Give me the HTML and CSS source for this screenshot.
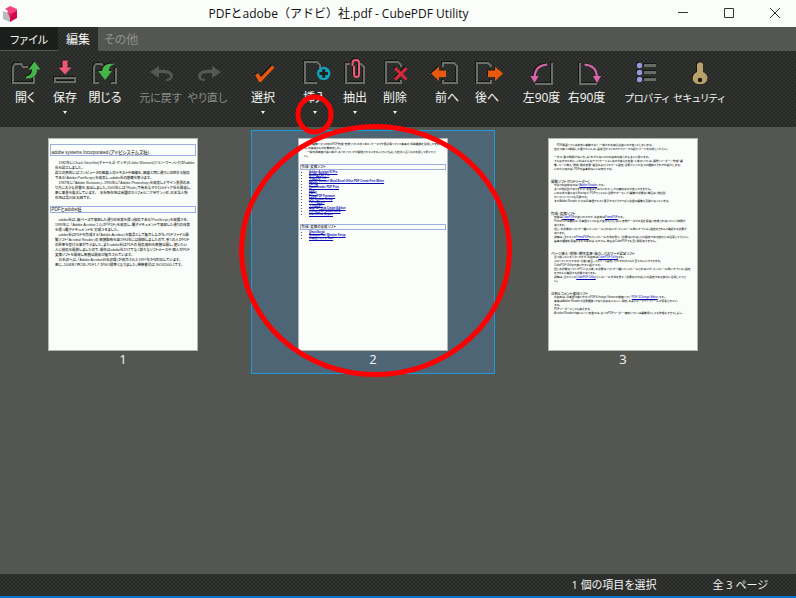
FILE: index.html
```html
<!DOCTYPE html>
<html lang="ja">
<head>
<meta charset="utf-8">
<title>PDFとadobe（アドビ）社.pdf - CubePDF Utility</title>
<link rel="stylesheet" href="styles.css">
</head>
<body>
<header class="titlebar">
  <svg class="logo" viewBox="0 0 16 18" aria-hidden="true">
    <path fill="#b9bbb9" d="M0 6l7 3v8l-7-3z"/>
    <path fill="#d5054f" d="M7 9l7-4v8l-7 4z"/>
    <path fill="#f2437c" d="M2 4l5-3 7 3v2L7 9 4 8l1-2z"/>
    <path fill="#e4205f" d="M5 8l4 1-2 4z"/>
  </svg>
  <h1 class="title">PDFとadobe（アドビ）社.pdf - CubePDF Utility</h1>
  <div class="window-controls">
    <button aria-label="最小化"><svg viewBox="0 0 12 12"><path d="M1 5.500h10"/></svg></button>
    <button aria-label="最大化"><svg viewBox="0 0 12 12"><path d="M1.500 1.500h9v9h-9z"/></svg></button>
    <button aria-label="閉じる"><svg viewBox="0 0 12 12"><path d="M1 1l10 10M11 1L1 11"/></svg></button>
  </div>
</header>
<nav class="tabs">
  <button class="tab tab-file">ファイル</button>
  <button class="tab tab-active">編集</button>
  <button class="tab tab-other">その他</button>
</nav>
<div class="ribbon texture" role="toolbar" aria-label="編集">
  <div class="group">
    <button class="tool"><svg viewBox="0 0 30 28"><path class="line" d="M24 19v6H3V9l2-3h6l2 3h5"/><path class="edge" fill="#45b549" d="M24.500 3.500l6 8h-3.500c0 6-3 9-11 9v-2c4-1 6-3 6-7h-3.500z"/></svg><span>開く</span></button>
    <button class="tool"><svg viewBox="0 0 30 28"><path class="edge" fill="#ee5977" d="M12.500 2.500h5v7h4L15 16.500 8.500 9.500h4z"/><path class="line" d="M5 20h20v4H5z"/></svg><span>保存</span><i class="caret"></i></button>
    <button class="tool"><svg viewBox="0 0 30 28"><path class="line" d="M9 25H4V9l2-3h5l2 2M22 25h4V10M21 25h5"/><path class="edge" fill="#45b549" d="M25 6c-4 1-6 3-6 7h3l-7 9-7-9h4c1-6 5-8 13-7z"/></svg><span>閉じる</span></button>
  </div>
  <div class="group group-history">
    <button class="tool" disabled><svg viewBox="0 0 30 28"><path fill="#555755" d="M4 14l9-6v4c9-1 14 2 14 6 0 3-3 5-7 5v-2c3 0 4-1 4-3 0-2-3-3-11-3v5z"/></svg><span>元に戻す</span></button>
    <button class="tool" disabled><svg viewBox="0 0 30 28"><path fill="#555755" d="M28 14l-9-6v4c-9-1-14 2-14 6 0 3 3 5 7 5v-2c-3 0-4-1-4-3 0-2 3-3 11-3v5z"/></svg><span>やり直し</span></button>
  </div>
  <div class="group">
    <button class="tool"><svg viewBox="0 0 30 28"><path class="edge" fill="#e8590f" d="M7 17l3-2 3 4L24 7.500l2.500 2L13 24h-2z"/></svg><span>選択</span><i class="caret"></i></button>
  </div>
  <div class="group">
    <button class="tool"><svg viewBox="0 0 30 28"><path class="line" d="M17 25H5V4h12l3 3v3"/><circle cx="23.700" cy="15.500" r="6.700" fill="#10a2b9"/><path stroke="#202220" stroke-width="3" d="M19.500 15.500h8.400M23.700 11.300v8.400"/></svg><span>挿入</span><i class="caret"></i></button>
    <button class="tool"><svg viewBox="0 0 30 28"><path class="line" d="M10 6H6v19h18V9l-3-3h-1"/><path class="edge" fill="none" stroke="#ee5977" stroke-width="2" d="M12.500 8V5c0-4 6.500-4 6.500 0v11c0 4-5 4-5 0V8"/></svg><span>抽出</span><i class="caret"></i></button>
    <button class="tool"><svg viewBox="0 0 30 28"><path class="line" d="M18 25H6V4h12l3 3v2M21 22v3h-4"/><path class="edge" fill="none" stroke="#d8293b" stroke-width="3" d="M15 10l11.500 11.500M26.500 10L15 21.500"/></svg><span>削除</span><i class="caret"></i></button>
  </div>
  <div class="group">
    <button class="tool"><svg viewBox="0 0 30 28"><path class="line" d="M11 9V5h11l3 3v17H11v-3"/><path class="edge" fill="#e8590f" d="M-1 15.500L7 8.500v4h7v6.500H7v4z"/></svg><span>前へ</span></button>
    <button class="tool"><svg viewBox="0 0 30 28"><path class="line" d="M19 9V8l-3-3H5v20h14v-3"/><path class="edge" fill="#e8590f" d="M31 15.500l-8-7v4h-7v6.500h7v4z"/></svg><span>後へ</span></button>
  </div>
  <div class="group group-rotate">
    <button class="tool"><svg viewBox="0 0 30 28"><path class="line" d="M25 5v21H8"/><path class="edge" fill="none" stroke="#dc66ae" stroke-width="2" d="M20 6.500C12 7 8 11 7.500 19"/><path fill="#dc66ae" d="M3.500 18h8l-4 7z"/></svg><span>左90度</span></button>
    <button class="tool"><svg viewBox="0 0 30 28"><path class="line" d="M8 5v21h17"/><path class="edge" fill="none" stroke="#dc66ae" stroke-width="2" d="M12.500 6.500C20.500 7 24.500 11 25 19"/><path fill="#dc66ae" d="M21 18h8l-4 7z"/></svg><span>右90度</span></button>
  </div>
  <div class="group group-wide">
    <button class="tool"><svg viewBox="0 0 30 28"><g class="edge"><path stroke="#696b69" stroke-width="3" d="M12 7.500h12M12 14.500h12M12 21.500h12"/><g fill="#9898dc"><circle cx="7.500" cy="7.500" r="2.700"/><circle cx="7.500" cy="14.500" r="2.700"/><circle cx="7.500" cy="21.500" r="2.700"/></g></g></svg><span>プロパティ</span></button>
    <button class="tool"><svg viewBox="0 0 30 28"><path class="edge" fill="#b7a069" d="M13 6l1.500-1.500h3L19 6v8c6 2 6 11-1 12h-4c-7-1-7-10-1-12z"/><circle cx="16" cy="22" r="2.200" fill="#1b1c1a"/></svg><span>セキュリティ</span></button>
  </div>
</div>
<main class="pages">
  <figure class="item">
    <div class="sheet sheet-a">
      <h2 class="tall">adobe systems Incorporated（アドビシステムズ社）</h2>
      <p>　1982年にChuck Geschke(チャールズ・ゲシキ)とJohn Warnock(ジョン・ワーノック)がadobe<br>社を設立しました。<br>設立の目的にはコンピュータの画面上のテキストや画像を、画面と同じ通りに印刷する技術<br>である「Adobe PostScript」を発表し、adobe社の基礎を築きます。<br>　1987年に「Adobe Illustrator」、1990年に「Adobe Photoshop」を発表しデザイン業界のあ<br>り方に大きな影響を 及ぼしました。2005年には「Flash」で有名なマクロメディア社を買収し、<br>更に事業を拡大しています。　本社所在地は米国のカリフォルニア州サンノゼ、日本法人所<br>在地は品川区大崎です。</p>
      <h2>PDFとadobe社</h2>
      <p>　adobe社は、紙ベースで意図した通りの体裁を保つ技術である「PostScript」を発展させ、<br>1993年に 「Adobe Acrobat 1.0」が「PDF」を発表し、電子ドキュメントで意図した通りの体裁<br>を保つ電子ドキュメントを 実現させました。<br>　adobe社はPDFを作成する「Adobe Acrobat」を製品として販売しながら、PDFファイル閲<br>覧ソフト「Acrobat Reader」の 無償配布を翌1994年には開始しましたので、多くの人がPDF<br>の恩恵を受ける事ができました。またadobe社はPDFの 技術資料を無償公開し、使いたい<br>人に技術を開放しましたので、現在はadobe社だけでなく様々なソフトメーカや 個人がPDF<br>変換ソフトを開発し無償公開及び販売されています。<br>　日本語へは、「Adobe Acrobat日本語版」が発売された1997年から対応しています。<br>更に、2008年7月2日、PDF1.7 がISO標準となりました。規格番号は ISO32000-1です。</p>
    </div>
    <figcaption>1</figcaption>
  </figure>
  <figure class="item item-selected">
    <div class="sheet sheet-b">
      <p>　PDF編集ソフトの中のPDF作成・変換ソフトのまとめと、ケータイや表計算ソフトで本来の 印刷機能を活用した変換<br>も、出来得るものを集めました。<br>　一般利用価値が高い為か、多くのソフトがが開発されています。いろいろ試して自分に合うものを探して見て下さ<br>い。</p>
      <h2>作成・変換ソフト</h2>
      <ul>
        <li><a href="#">Adobe Acrobat XI Pro</a></li><li><a href="#">BullZip PDF Prt</a></li><li><a href="#">CubePDF 1.0</a></li><li><a href="#">doPDF Convert Word Excel Office PDF Create Free Writer</a></li><li><a href="#">PDF24</a></li><li><a href="#">Foxit Reader PDF Print</a></li><li><a href="#">iText</a></li><li><a href="#">PDFill</a></li><li><a href="#">PrimoPDF Freeware</a></li><li><a href="#">PDFCreator Setup</a></li><li><a href="#">Pdf reDirect</a></li><li><a href="#">クセロPDF</a></li><li><a href="#">瞬簡PDF 作成 Create Edition</a></li><li><a href="#">いきなりPDF COMPLETE</a></li><li><a href="#">LibreOffice Export</a></li>
      </ul>
      <h2>作成・変換の支援ソフト</h2>
      <ul>
        <li><a href="#">GhostScript</a></li><li><a href="#">Redmon Port Monitor Setup</a></li><li><a href="#">日本語フォント Tool</a></li>
      </ul>
    </div>
    <figcaption>2</figcaption>
  </figure>
  <figure class="item">
    <div class="sheet sheet-c">
      <p>　PDF関連ソフトは非常に本数が多く、一体どれを使えば良いのか迷ってしまいます。<br>自分で使って納得して選びたい人は、是非当サイトのカテゴリーから紹介ページをお探しください。<br><br>一方で、選ぶ時間がない方、よくわからないのでお勧めを使う方も多いと思います。<br>そんな方のために、これはどんなアプリケーションなのか使える定番・人気のソフトは、閲覧（リーダー）・作成・編<br>集、ページ挿入・削除・順序変更・結合およびパスワード設定、注釈といった各々の機能でそれぞれ紹介します。<br>これだけあれば、PDFの基本的なことは充分です。</p>
      <h3>閲覧ソフト（PDFリーダー）</h3>
      <p>やはりお勧めなのは「<a href="#">Adobe Reader</a>」です。<br>多くの他社製がありますが、定番はやはりこれで、しかも無料なので安心できません。<br>これ以外で選ぶならFoxitなど、PDFファイルに注釈やマーキング（編集が必要な）場合は、他社製<br>のソフトについても可能です。<br>またAdobe Reader だけは日本語テキスト表示やタブブラウズに必須の編集も可能となっています。</p>
      <h3>作成・変換ソフト</h3>
      <p>定番は<a href="#">CubePDF</a>が良いのですが、お勧めは<a href="#">PrimoPDF</a>です。<br>PrimoPDFは無料で、日本語ファイル名が文字化けしない。変換データがお金を意識に変換されないという特徴が<br>あります。<br>但し、不必要なソフトが一緒にインストールされないか、インストール時にオプション設定をきちんと確認する必要が<br>あります。<br>詳細は、当サイトの<a href="#">PrimoPDF</a>のインストール方法を見て、「必要なければ」との設定がある部分には注意して下さい。<br>基本の機能を意識するのであれば、もちろん、有名なCubePDFでも全く問題ありません。</p>
      <h3>ページ挿入・削除・順序変更・結合、パスワード設定ソフト</h3>
      <p>全て揃っているソフトですが、お勧めは<a href="#">CubePDF Utility</a>です。<br>このソフトだけでほぼ、分割、結合、パスワード設定、それぞれほとんど全てのことができます。<br>CubePDF Utilityが使いやすい紹介です。<br>但し不必要なソフトがPCに入る為、不必要なソフトが一緒にインストールされないか、インストール時にオプション設定<br>をきちんと確認する必要があります。<br>詳細は、当サイトの<a href="#">CubePDF Utility</a>インストール方法を見て、「必要なければ」との設定がある部分に注意して下さ<br>い。</p>
      <h3>注釈&amp;コメント追加ソフト</h3>
      <p>お勧めは、日本語で使いやすいPDFXchange Viewerの後継ソフト「<a href="#">PDF-XChange Editor</a>」です。<br>本来はAdobe Readerで注釈機能、かなり多彩なコメント、図形、およびマークアップツールが用意されてい<br>ます。<br>PDFリーダーとしても使えます。<br>Acrobat Readerが使いにくい定番では、多くのPDFリーダー（無料ソフト）は編集用としても作成もできてしょう。</p>
    </div>
    <figcaption>3</figcaption>
  </figure>
</main>
<footer class="status texture">
  <span>1 個の項目を選択</span>
  <span>全 3 ページ</span>
</footer>
<svg class="annotation" aria-hidden="true">
  <ellipse cx="314.500" cy="114.500" rx="16.500" ry="17.500"/>
  <ellipse cx="375.500" cy="250.500" rx="134" ry="124"/>
</svg>
</body>
</html>
```
FILE: styles.css
```css
* {
  box-sizing: border-box;
}

body {
  margin: 0;
  min-height: 100vh;
  display: flex;
  flex-direction: column;
  position: relative;
  background: #545652;
  color: #f4f6f3;
  font-family: "Open Sans", "Noto Sans CJK JP", sans-serif;
  font-size: 12px;
  font-feature-settings: "palt";
}

button {
  margin: 0;
  padding: 0;
  border: 0;
  background: none;
  color: inherit;
  font: inherit;
  font-feature-settings: inherit;
}

.texture,
.tab-active {
  background-color: #323431;
  background-image:
    radial-gradient(circle, #272926 1px, transparent 1px),
    radial-gradient(circle, #272926 1px, transparent 1px);
  background-size: 4px 4px;
  background-position: 0 0, 2px 2px;
}

.titlebar {
  display: flex;
  align-items: center;
  height: 27px;
  padding-left: 3px;
  background: #fafdfa;
  color: #111;
}

.logo {
  width: 16px;
  height: 18px;
}

.title {
  flex: 1;
  margin: 0;
  font-size: 12px;
  line-height: 24px;
  font-weight: 400;
  font-feature-settings: normal;
  text-align: center;
  white-space: nowrap;
}

.window-controls {
  display: flex;
}

.window-controls button {
  display: grid;
  place-items: center;
  width: 46px;
  height: 26px;
  padding: 0 0 2px 4px;
}

.window-controls svg {
  width: 12px;
  height: 12px;
  fill: none;
  stroke: #333;
}

.tabs {
  display: flex;
  height: 24px;
}

.tab {
  width: 40px;
  padding-top: 2px;
  line-height: 22px;
  white-space: nowrap;
}

.tab-file {
  width: 58px;
  background: #1c1e1b;
  border-bottom: 1px solid #545652;
  font-size: 11px;
}

.tab-other {
  width: 46px;
  color: #8f918e;
}

.ribbon {
  display: flex;
  gap: 12px;
  height: 76px;
  padding: 7px 5px 0;
}

.group {
  display: flex;
}

.tool {
  display: flex;
  flex-direction: column;
  align-items: center;
  width: 40px;
  line-height: 20px;
  white-space: nowrap;
}

.group-history .tool {
  width: 47px;
  font-size: 11px;
}

.group-rotate .tool {
  width: 45px;
}

.group-wide .tool {
  width: 52px;
  font-size: 10px;
}

.tool:disabled {
  color: #8a8c89;
}

.tool svg {
  width: 30px;
  height: 28px;
  overflow: visible;
}

.tool span {
  margin-top: 2px;
}

.line {
  fill: none;
  stroke: #6b6d6a;
  stroke-width: 2;
}

.line,
.edge {
  filter: drop-shadow(-1px -1px 0 #161715);
}

.caret {
  margin-top: 3px;
  border: 2px solid transparent;
  border-top: 3px solid #f4f6f3;
  border-bottom: 0;
}

.pages {
  flex: 1;
  display: grid;
  grid-template-columns: repeat(auto-fill, 244px);
  align-content: start;
  gap: 6px;
  padding: 3px 1px;
}

.item {
  display: flex;
  flex-direction: column;
  align-items: center;
  margin: 0;
  padding: 7px 0 6px;
  border: 1px solid transparent;
}

.item-selected {
  background: #4e6575;
  border-color: #1b9ad6;
}

.item figcaption {
  line-height: 16px;
  font-size: 13px;
}

/* Sheets are laid out at four times the thumbnail size, then zoomed out. */
.sheet {
  zoom: 0.25;
  width: 600px;
  height: 852px;
  overflow: hidden;
  border: 4px solid #b4b6b3;
  background: #fafdfa;
  color: #1c1c1c;
  font-family: "Liberation Sans", "Noto Sans CJK JP", sans-serif;
  font-size: 11px;
  font-weight: 500;
  line-height: 16px;
  white-space: nowrap;
}

.sheet h2,
.sheet h3,
.sheet p,
.sheet ul {
  margin: 0;
  padding: 0;
  font-size: inherit;
}

.sheet h2 {
  margin: 0 4px;
  padding-left: 2px;
  border: 4px solid #9aaee0;
  font-size: 14px;
  font-weight: 500;
}

.sheet h3 {
  margin-top: 32px;
  font-size: 14px;
  font-weight: 500;
}

.sheet a {
  color: #0b0bb4;
}

.sheet-a {
  padding-top: 20px;
  font-size: 14px;
  line-height: 20px;
}

.sheet-a h2 {
  font-size: 18px;
}

.sheet-a .tall {
  padding-top: 20px;
}

.sheet-a p {
  padding: 20px 8px 20px 24px;
}

.sheet-b {
  padding-top: 16px;
}

.sheet-b p {
  padding: 0 0 20px 20px;
}

.sheet-b ul {
  padding: 4px 0 32px 40px;
  font-weight: 700;
  line-height: 12px;
}

.sheet-c {
  padding: 20px 8px;
}

.sheet-c p {
  padding-left: 12px;
}

.status {
  display: flex;
  justify-content: flex-end;
  gap: 56px;
  height: 24px;
  padding-right: 28px;
  border-bottom: 2px solid #0a74cf;
  font-size: 11px;
  line-height: 22px;
}

.annotation {
  position: absolute;
  inset: 0;
  width: 100%;
  height: 100%;
  fill: none;
  stroke: #f00;
  stroke-width: 5;
  pointer-events: none;
}
```
